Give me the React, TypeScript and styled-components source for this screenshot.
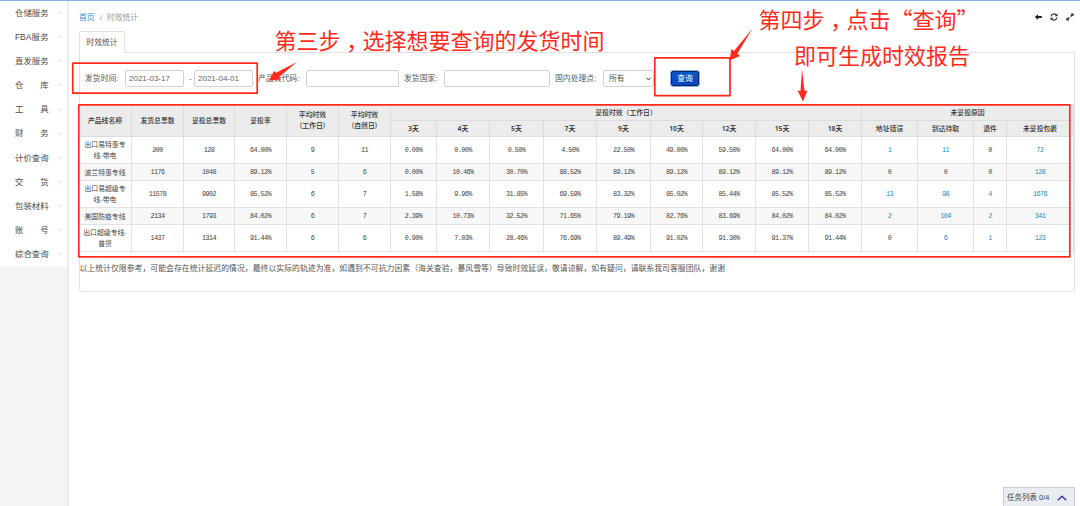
import React from 'react';
import styled, { createGlobalStyle } from 'styled-components';

const RED = '#ff2a1c';
const LINE = '#e2e2e2';

const GlobalStyle = createGlobalStyle`
  * { box-sizing: border-box; }
  body {
    margin: 0;
    background: #fff;
    color: #555;
    font: 7.83px/1 "Liberation Sans", "Noto Sans CJK SC", sans-serif;
  }
`;

const Page = styled.div`
  position: relative;
  display: flex;
  width: 1080px;
  height: 506px;
  overflow: hidden;
  border-top: 1px solid #85b0e6;
`;

const Sidebar = styled.aside`
  width: 69px;
  flex: none;
  background: #f4f4f4;
  border-right: 2px solid #ececec;
`;

const Menu = styled.ul`
  margin: 0;
  padding: 0 0 0 15px;
  list-style: none;
  background: #fff;
`;

const MenuItem = styled.li`
  display: flex;
  align-items: center;
  height: 24.14px;
  font-size: 8.4px;
  color: #4c4c4c;
`;

const MenuLabel = styled.span`
  width: 33.6px;
  white-space: nowrap;
  text-align: justify;
  text-align-last: justify;
`;

const Chevron = styled.span`
  margin-left: 10px;
  font-size: 6px;
  color: #ccc;
`;

const Main = styled.main`
  flex: none;
  width: 1005px;
  padding: 0 0 0 10px;
`;

const TopBar = styled.header`
  display: flex;
  justify-content: space-between;
  align-items: center;
  height: 30px;
  padding-top: 2px;
`;

const Crumbs = styled.nav`
  display: flex;
  gap: 5px;
  padding-top: 1px;
  color: #999;
  b { font-weight: 400; color: #1a94cf; }
`;

const Tools = styled.div`
  display: flex;
  gap: 8px;
  padding-bottom: 1px;
  svg { display: block; width: 8px; height: 8px; }
`;

const Tab = styled.div`
  position: relative;
  width: 46px;
  height: 22px;
  margin-bottom: -1px;
  border: 1px solid ${LINE};
  border-bottom: 0;
  border-radius: 2px 2px 0 0;
  background: #fff;
  line-height: 21px;
  text-align: center;
`;

const Panel = styled.section`
  width: 996px;
  height: 240px;
  border: 1px solid ${LINE};
  border-radius: 0 0 3px 3px;
`;

const Form = styled.form`
  display: flex;
  align-items: center;
  height: 51px;
  padding-left: 5px;
`;

const Label = styled.label<{ $w: number }>`
  flex: none;
  width: ${p => p.$w}px;
  white-space: nowrap;
`;

const Field = styled.input<{ $w: number }>`
  flex: none;
  width: ${p => p.$w}px;
  height: 17px;
  margin: 0 5px 0 0;
  padding: 0 3px;
  border: 1px solid #d2d2d2;
  border-radius: 2px;
  background: #fff;
  font: 8px "Liberation Sans", sans-serif;
  color: #666;
  outline: 0;
`;

const Dash = styled.span`
  width: 5px;
`;

const SelectBox = styled.div`
  display: flex;
  align-items: center;
  justify-content: space-between;
  width: 51px;
  height: 17px;
  padding: 0 2px 0 5px;
  border: 1px solid #d2d2d2;
  border-radius: 2px;
  svg { width: 5px; height: 4px; }
`;

const QueryButton = styled.button`
  width: 28px;
  height: 15px;
  margin-left: 17px;
  padding: 0;
  border: 1px solid #10254f;
  border-radius: 2px;
  background: linear-gradient(#0a58c8, #0646c4);
  box-shadow: 0 0 0 1px #86aee2;
  color: #fff;
  font: 7.83px/12px "Liberation Sans", "Noto Sans CJK SC", sans-serif;
`;

const Table = styled.table`
  width: 995px;
  margin-left: -1px;
  table-layout: fixed;
  border-collapse: separate;
  border-spacing: 0;
  font-size: 6.85px;
  color: #333;
  text-align: center;
`;

const Th = styled.th<{ $bold?: boolean }>`
  padding: 0;
  background: #ececec;
  border: solid #dcdcdc;
  border-width: 0 1px 1px 0;
  font-weight: ${p => (p.$bold ? 600 : 500)};
  font-family: ${p => (p.$bold ? '"Noto Sans", ' : '')}"Noto Sans CJK SC", sans-serif;
  line-height: 11px;
  color: #333;
`;

const Row = styled.tr<{ $h: number; $alt?: boolean }>`
  height: ${p => p.$h}px;
  background: ${p => (p.$alt ? '#f8f8f8' : '#fff')};
`;

const Td = styled.td<{ $link?: boolean }>`
  padding: 0;
  border: solid ${LINE};
  border-width: 0 1px 1px 0;
  font-family: "Liberation Mono", monospace;
  font-size: 6.8px;
  letter-spacing: -0.6px;
  color: ${p => (p.$link ? '#1590d0' : '#444')};
`;

const NameTd = styled(Td)`
  font-family: "Noto Sans CJK SC", sans-serif;
  font-size: 6.85px;
  letter-spacing: 0;
  line-height: 11px;
`;

const Note = styled.p`
  margin: 13px 0 0 -0.5px;
  letter-spacing: 0.045px;
  white-space: nowrap;
`;

const TaskList = styled.div`
  position: absolute;
  left: 1003px;
  top: 486px;
  display: flex;
  align-items: center;
  justify-content: space-between;
  width: 72px;
  height: 20px;
  padding: 0 7px 0 3px;
  border: 1px solid #cdd1d6;
  border-bottom: 0;
  background: #e9edf2;
  font-size: 7.5px;
  color: #444;
  svg { width: 10px; height: 6px; }
`;

const Marks = styled.svg`
  position: absolute;
  left: 0;
  top: -1px;
  pointer-events: none;
`;

const Callout = styled.div<{ $x: number; $y: number }>`
  position: absolute;
  left: ${p => p.$x}px;
  top: ${p => p.$y}px;
  font: 22px/24px "Noto Sans CJK SC", sans-serif;
  color: ${RED};
  white-space: nowrap;
`;

const Comma = styled.span`
  position: relative;
  top: 7px;
  font-family: "Noto Sans CJK TC", sans-serif;
`;

const menu = ['仓储服务', 'FBA服务', '直发服务', '仓 库', '工 具', '财 务', '计价查询', '交 货', '包装材料', '账 号', '综合查询'];
const widths = [53, 52, 51, 52, 52, 52, 46, 53, 54, 53, 54, 52, 53, 53, 53, 56, 56, 33, 67];
const days = [3, 4, 5, 7, 9, 10, 12, 15, 18];

const rows: { name: string[]; h: number; cells: string[] }[] = [
  { name: ['出口易特惠专', '线-带电'], h: 27, cells: '200 128 64.00% 9 11 0.00% 0.00% 0.50% 4.50% 22.50% 49.00% 59.50% 64.00% 64.00% 1 11 0 72'.split(' ') },
  { name: ['波兰特惠专线'], h: 17, cells: '1176 1048 89.12% 5 6 0.00% 10.46% 30.70% 88.52% 89.12% 89.12% 89.12% 89.12% 89.12% 0 0 0 128'.split(' ') },
  { name: ['出口易超级专', '线-带电'], h: 27, cells: '11578 9902 85.52% 6 7 1.58% 9.96% 31.85% 69.59% 83.32% 85.02% 85.44% 85.52% 85.52% 13 98 4 1676'.split(' ') },
  { name: ['美国防疫专线'], h: 17, cells: '2134 1793 84.02% 6 7 2.39% 10.73% 32.52% 71.65% 79.19% 82.76% 83.69% 84.02% 84.02% 2 104 2 341'.split(' ') },
  { name: ['出口超级专线-', '普货'], h: 27, cells: '1437 1314 91.44% 6 6 0.90% 7.03% 28.46% 76.69% 89.49% 91.02% 91.30% 91.37% 91.44% 0 6 1 123'.split(' ') },
];

function ReportTable() {
  return (
    <Table>
      <colgroup>{widths.map((w, i) => <col key={i} style={{ width: w }} />)}</colgroup>
      <thead>
        <Row $h={17}>
          {['产品线名称', '发货总票数', '妥投总票数', '妥投率'].map(t => <Th key={t} rowSpan={2}>{t}</Th>)}
          <Th rowSpan={2}>平均时效<br />(工作日)</Th>
          <Th rowSpan={2}>平均时效<br />(自然日)</Th>
          <Th colSpan={9}>妥投时效（工作日）</Th>
          <Th colSpan={4}>未妥投原因</Th>
        </Row>
        <Row $h={16}>
          {days.map(d => <Th key={d} $bold>{d}天</Th>)}
          {['地址错误', '到达待取', '退件', '未妥投包裹'].map(t => <Th key={t}>{t}</Th>)}
        </Row>
      </thead>
      <tbody>
        {rows.map((r, n) => (
          <Row key={n} $h={r.h} $alt={n % 2 === 1}>
            <NameTd>{r.name.map(l => <div key={l}>{l}</div>)}</NameTd>
            {r.cells.map((c, i) => <Td key={i} $link={i > 13 && c !== '0'}>{c}</Td>)}
          </Row>
        ))}
      </tbody>
    </Table>
  );
}

export default function App() {
  return (
    <Page lang="zh-CN">
      <GlobalStyle />
      <Sidebar>
        <Menu>
          {menu.map(m => (
            <MenuItem key={m}>
              <MenuLabel>{m}</MenuLabel>
              <Chevron>&gt;</Chevron>
            </MenuItem>
          ))}
        </Menu>
      </Sidebar>
      <Main>
        <TopBar>
          <Crumbs><b>首页</b><span>/</span><span>时效统计</span></Crumbs>
          <Tools>
            <svg viewBox="0 0 8 8"><path d="M.8 4 4 1.2v1.9H7.8v1.8H4v1.9z" fill="#222" /></svg>
            <svg viewBox="0 0 8 8" fill="none" stroke="#222" strokeWidth="1.1">
              <path d="M1 3.4A3 3 0 0 1 6.4 2.2M7 4.6A3 3 0 0 1 1.6 5.8" />
              <path d="M7.5.6v2.7H4.8zM.5 7.4V4.7h2.7z" fill="#222" stroke="none" />
            </svg>
            <svg viewBox="0 0 8 8"><path d="M4.6.6H7.6v3zM.4 4.4v3h3z" fill="#222" /><path d="M1.4 6.4 3.4 4.5M4.6 3.4 6.6 1.6" stroke="#222" strokeWidth="1.4" /></svg>
          </Tools>
        </TopBar>
        <Tab>时效统计</Tab>
        <Panel>
          <Form>
            <Label $w={40}>发货时间:</Label>
            <Field $w={59} defaultValue="2021-03-17" />
            <Dash>-</Dash>
            <Field $w={59} defaultValue="2021-04-01" />
            <Label $w={48}>产品线代码:</Label>
            <Field $w={93} />
            <Label $w={40}>发货国家:</Label>
            <Field $w={106} />
            <Label $w={48}>国内处理点:</Label>
            <SelectBox>
              所有
              <svg viewBox="0 0 5 4"><path d="M.5.8 2.5 3 4.5.8" fill="none" stroke="#333" /></svg>
            </SelectBox>
            <QueryButton type="button">查询</QueryButton>
          </Form>
          <ReportTable />
          <Note>以上统计仅限参考，可能会存在统计延迟的情况，最终以实际的轨迹为准，如遇到不可抗力因素（海关查验，暴风雪等）导致时效延误，敬请谅解，如有疑问，请联系我司客服团队，谢谢</Note>
        </Panel>
      </Main>
      <TaskList>
        任务列表 0/4
        <svg viewBox="0 0 10 6"><path d="M.8 5.2 5 1.2 9.2 5.2" fill="none" stroke="#2f3fae" strokeWidth="1.5" /></svg>
      </TaskList>
      <Marks width="1080" height="506">
        <g fill="none" stroke={RED} strokeWidth="1.7" strokeLinejoin="round">
          <rect x="72.8" y="63.2" width="184.4" height="30" />
          <rect x="654.8" y="57.9" width="75.2" height="37.7" />
          <rect x="78.8" y="104.8" width="991" height="152" />
        </g>
        <g fill={RED}>
          <path d="M297 62 276 72.8 274 71 269 80.5 280.5 79.5 279 77z" />
          <path d="M752.5 28.5 734 51 731.5 49 729.5 60.5 740 56 737.5 53.5z" />
          <path d="M802 69 800.5 91 797.5 90.5 803 101.5 807.5 90.5 804.5 91z" />
        </g>
      </Marks>
      <Callout $x={274.5} $y={25.5}>第三步<Comma lang="zh-TW">，</Comma>选择想要查询的发货时间</Callout>
      <Callout $x={758.5} $y={5}>第四步<Comma lang="zh-TW">，</Comma>点击“查询”</Callout>
      <Callout $x={794} $y={41}>即可生成时效报告</Callout>
    </Page>
  );
}
